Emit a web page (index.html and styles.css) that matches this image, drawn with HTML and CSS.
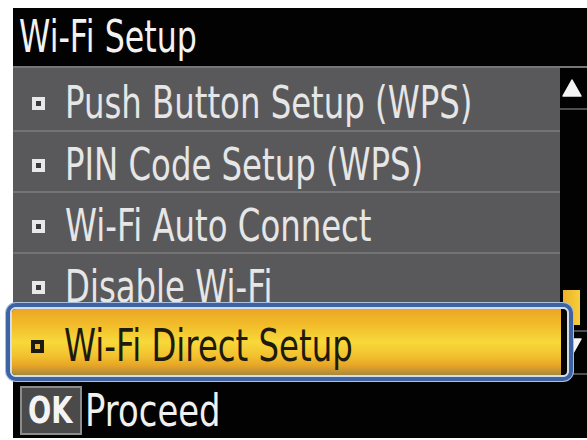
FILE: index.html
```html
<!DOCTYPE html>
<html lang="en">
<head>
<meta charset="utf-8">
<title>Wi-Fi Setup</title>
<link rel="stylesheet" href="styles.css">
</head>
<body>
<div class="screen">
  <div class="title"><span class="t">Wi-Fi Setup</span></div>
  <div class="body">
    <div class="menu">
      <div class="row row-first"><span class="bullet"></span><span class="t">Push Button Setup (WPS)</span></div>
      <div class="row"><span class="bullet"></span><span class="t">PIN Code Setup (WPS)</span></div>
      <div class="row"><span class="bullet"></span><span class="t">Wi-Fi Auto Connect</span></div>
      <div class="row"><span class="bullet"></span><span class="t">Disable Wi-Fi</span></div>
      <div class="sel">
        <div class="sel-blue">
          <div class="sel-inner">
            <div class="sel-fill"><span class="bullet bullet-dark"></span><span class="t">Wi-Fi Direct Setup</span></div>
          </div>
        </div>
      </div>
    </div>
    <div class="scroll">
      <div class="arrow-box up">
        <svg width="20" height="18" viewBox="0 0 20 18"><polygon points="10,1 19,17 1,17" fill="#f4f4f4" stroke="#f4f4f4" stroke-width="1.5" stroke-linejoin="round"/></svg>
      </div>
      <div class="track"></div>
      <div class="thumb"></div>
      <div class="arrow-box down">
        <svg width="20" height="18" viewBox="0 0 20 18"><polygon points="1,1 19,1 10,17" fill="#f4f4f4" stroke="#f4f4f4" stroke-width="1.5" stroke-linejoin="round"/></svg>
      </div>
    </div>
  </div>
  <div class="footer">
    <div class="ok"><span class="t">OK</span></div>
    <span class="t proceed">Proceed</span>
  </div>
</div>
</body>
</html>
```
FILE: styles.css
```css
html, body {
  margin: 0;
  padding: 0;
  background: #ffffff;
}
body {
  width: 587px;
  height: 440px;
  overflow: hidden;
  font-family: "DejaVu Sans", sans-serif;
}
.screen {
  margin: 8px 0 0 13px;
  width: 574px;
  height: 430px;
  background: #030203;
  display: flex;
  flex-direction: column;
}
.t {
  display: inline-block;
  white-space: nowrap;
  transform: scaleX(0.72);
  transform-origin: 0 50%;
}
.title {
  height: 58px;
  border-bottom: 2px solid #767676;
  color: #f2f2f2;
  font-size: 44px;
  line-height: 58px;
  padding-left: 6px;
}
.title .t {
  margin-top: -4px;
}
.body {
  display: flex;
}
.menu {
  width: 547px;
  display: flex;
  flex-direction: column;
}
.row {
  height: 59px;
  background: #59595b;
  border-top: 2px solid #737373;
  display: flex;
  align-items: center;
  gap: 20px;
  padding-left: 19px;
  color: #e6e6e6;
  font-size: 44px;
}
.row-first {
  height: 62px;
  border-top: none;
}
.row .t,
.sel-fill .t {
  margin-top: 6px;
  transform: scaleX(0.735);
}
.bullet {
  width: 5px;
  height: 5px;
  border: 4px solid #e8e8e8;
  background: #3a3a3a;
  margin-top: 8px;
  flex: none;
}
.bullet-dark {
  border-color: #1c1a12;
  background: #e9bf2e;
}
.sel {
  position: relative;
  z-index: 1;
  margin: -11px -14px 0 -8px;
  height: 80px;
  padding: 1px;
  border-radius: 11px;
  background: #a8bfdf;
  box-sizing: border-box;
}
.sel-blue {
  height: 100%;
  box-sizing: border-box;
  border: 4px solid #3d63a3;
  border-radius: 10px;
}
.sel-inner {
  height: 100%;
  box-sizing: border-box;
  border: 2px solid #d3deec;
  border-radius: 6px;
  background: #050403;
  padding-right: 6px;
  overflow: hidden;
}
.sel-fill {
  height: 100%;
  background: linear-gradient(to bottom, #eca624 0%, #f2bd2b 25%, #f7d93a 50%, #f2c02e 72%, #e6a426 86%, #a88a3c 100%);
  display: flex;
  align-items: center;
  gap: 20px;
  padding-left: 19px;
  color: #1d1a0e;
  font-size: 44px;
}
.scroll {
  width: 27px;
  display: flex;
  flex-direction: column;
}
.arrow-box {
  display: flex;
  justify-content: flex-start;
  padding-left: 2px;
  border-bottom: 2px solid #4e4e4e;
}
.up {
  height: 40px;
  align-items: center;
}
.track {
  height: 180px;
}
.thumb {
  width: 17px;
  height: 35px;
  margin-left: 3px;
  background: linear-gradient(to right, #eeb02a, #f6cf3a);
  border-bottom: 5px solid #030203;
}
.down {
  border-top: 2px solid #4e4e4e;
  align-items: flex-start;
  padding-top: 6px;
  box-sizing: border-box;
  height: 45px;
}
.footer {
  display: flex;
  align-items: flex-start;
  padding: 4px 0 0 7px;
  gap: 3px;
}
.ok {
  width: 52px;
  height: 45px;
  border: 2px solid #8c8c8c;
  background: #4a4a4a;
  color: #f4f4f4;
  font-size: 38px;
  font-weight: bold;
  line-height: 45px;
  padding-left: 6px;
}
.proceed {
  color: #f0f0f0;
  font-size: 44px;
  line-height: 49px;
  transform: scaleX(0.77);
}
```
